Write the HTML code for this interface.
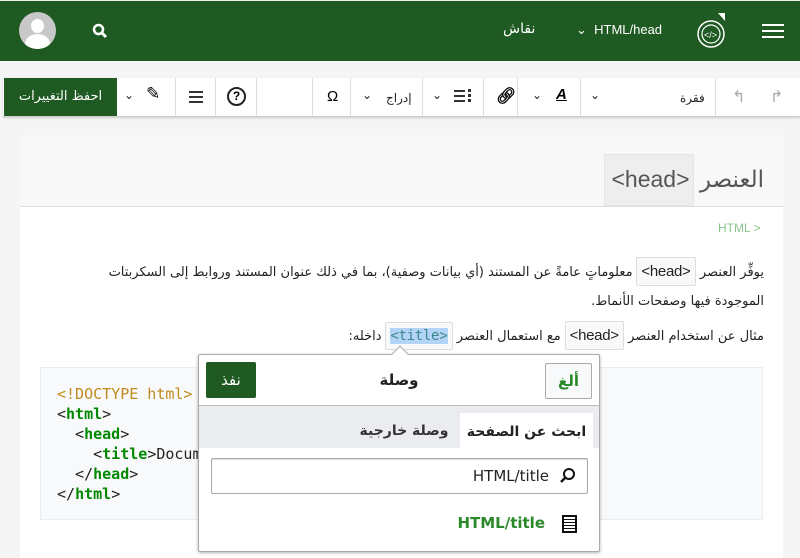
<!DOCTYPE html>
<html><head><meta charset="utf-8"><style>
*{box-sizing:border-box;margin:0;padding:0}
body{width:800px;height:558px;overflow:hidden;background:#f5f5f5;font-family:"Liberation Sans","Noto Sans CJK SC",sans-serif;position:relative}
.a{position:absolute}
.hdr{left:0;top:0;width:800px;height:61px;background:#1f5a22;border-top:1px solid #eee}
.tb{left:3px;top:78px;width:797px;height:39px;background:#fff;border-bottom:1px solid #ccc;box-shadow:0 1px 2px #ccc}
.sep{top:78px;width:1px;height:38px;background:#ddd}
.t{color:#222;font-size:12px;top:91px}
.code{font-family:"DejaVu Sans Mono",monospace}
.ic{background:#f8f9fa;border:1px solid #ddd;border-radius:2px;font-family:"Liberation Sans",sans-serif;font-size:15px;padding:5px 4px}
</style></head><body>
<div class="a hdr"></div>
<div class="a" style="left:19px;top:12px;width:37px;height:37px;border-radius:50%;background:#c8c8c8;overflow:hidden">
<div class="a" style="left:12px;top:7px;width:13px;height:14px;border-radius:50%;background:#fff"></div>
<div class="a" style="left:6px;top:22px;width:25px;height:20px;border-radius:50% 50% 0 0;background:#fff"></div></div>
<svg class="a" style="left:92px;top:23px" width="16" height="16"><circle cx="6.5" cy="6.5" r="4.5" fill="none" stroke="#fff" stroke-width="2.5"/><path d="M10 10l4 4" stroke="#fff" stroke-width="3"/></svg>
<div class="a" style="left:503px;top:21px;color:#fff;font-size:14px;font-family:'DejaVu Sans',sans-serif">نقاش</div>
<div class="a" style="left:576px;top:22px;color:#fff;font-size:13px">⌄ &nbsp;HTML/head</div>
<svg class="a" style="left:692px;top:12px" width="44" height="40"><circle cx="19" cy="22" r="13" fill="none" stroke="#fff" stroke-width="1.5"/><circle cx="19" cy="22" r="9" fill="none" stroke="#fff" stroke-width="1.2"/><text x="12" y="26" fill="#fff" font-size="9" font-family="Liberation Sans">&lt;/&gt;</text><path d="M26 1h7v8z" fill="#fff"/></svg>
<div class="a" style="left:762px;top:24px;width:22px;height:2px;background:#fff;box-shadow:0 6px #fff,0 12px #fff"></div>

<div class="a tb"></div>
<div class="a" style="left:4px;top:78px;width:113px;height:38px;background:#1e5a22;color:#fff;font-size:13px;text-align:center;line-height:38px;font-family:'DejaVu Sans',sans-serif">احفظ التغييرات</div>
<div class="a t" style="left:124px;top:88px">⌄</div><div class="a" style="left:146px;top:84px;font-size:17px">✎</div>
<div class="a sep" style="left:175px"></div>
<div class="a" style="left:189px;top:91px;width:14px;height:2px;background:#333;box-shadow:0 5px #333,0 10px #333"></div>
<div class="a sep" style="left:215px"></div>
<div class="a" style="left:227px;top:87px;width:19px;height:19px;border:2px solid #222;border-radius:50%;font-size:12px;font-weight:bold;text-align:center;line-height:15px">?</div>
<div class="a sep" style="left:256px"></div>
<div class="a sep" style="left:312px"></div>
<div class="a" style="left:327px;top:88px;font-size:15px">Ω</div>
<div class="a sep" style="left:350px"></div>
<div class="a t" style="left:362px;top:88px">⌄</div><div class="a t" style="left:386px">إدراج</div>
<div class="a sep" style="left:422px"></div>
<div class="a t" style="left:432px;top:88px">⌄</div>
<div class="a" style="left:454px;top:90px;width:11px;height:2px;background:#333;box-shadow:0 5px #333,0 10px #333"></div>
<div class="a" style="left:468px;top:89px;width:3px;height:3px;background:#333;box-shadow:0 5px #333,0 10px #333"></div>
<div class="a sep" style="left:483px"></div>
<div class="a" style="left:496px;top:86px;font-size:16px;font-weight:bold">&#x1F517;&#xFE0E;</div>
<div class="a sep" style="left:517px"></div>
<div class="a t" style="left:532px;top:88px">⌄</div>
<div class="a" style="left:556px;top:86px;font-size:15px;font-weight:bold;font-style:italic;text-decoration:underline">A</div>
<div class="a sep" style="left:580px"></div>
<div class="a t" style="left:590px;top:88px">⌄</div><div class="a t" style="left:680px">فقرة</div>
<div class="a sep" style="left:715px"></div>
<div class="a" style="left:732px;top:87px;color:#aaa;font-size:16px">↰</div>
<div class="a" style="left:770px;top:87px;color:#aaa;font-size:16px">↱</div>

<div class="a" style="left:20px;top:135px;width:763px;height:423px;background:#fff"></div>
<div class="a" style="left:20px;top:135px;width:763px;height:72px;background:#f8f8f8;border-bottom:1px solid #ddd"></div>
<div class="a" style="left:604px;top:154px;width:90px;height:52px;background:#eee;border:1px solid #e4e4e4"></div>
<div class="a" style="top:166px;font-size:23px;color:#555;direction:rtl;width:160px;text-align:right;left:604px"><span style="font-family:'DejaVu Sans',sans-serif">العنصر</span> <span style="padding:0 4px">&lt;head&gt;</span></div>
<div class="a" style="left:718px;top:221px;font-size:12px;color:#8bc48b">HTML &gt;</div>
<div class="a" style="left:40px;top:257px;width:724px;direction:rtl;font-size:13px;line-height:29px;color:#222;font-family:'DejaVu Sans',sans-serif;letter-spacing:-.3px;white-space:nowrap">يوفِّر العنصر <span class="ic">&lt;head&gt;</span> معلوماتٍ عامةً عن المستند (أي بيانات وصفية)، بما في ذلك عنوان المستند وروابط إلى السكربتات<br>الموجودة فيها وصفحات الأنماط.</div>
<div class="a" style="left:40px;top:322px;width:724px;direction:rtl;font-size:13px;line-height:28px;color:#222;font-family:'DejaVu Sans',sans-serif;letter-spacing:-.3px">مثال عن استخدام العنصر <span class="ic">&lt;head&gt;</span> مع استعمال العنصر <span class="ic" style="font-family:'DejaVu Sans Mono',monospace;font-size:14px"><span style="background:#b4d4f7;color:#3a8a8a">&lt;title&gt;</span></span> داخله:</div>

<div class="a code" style="left:40px;top:367px;width:723px;height:153px;background:#f8f9fa;border:1px solid #eaecf0;padding:16px 0 0 16px;font-size:15px;line-height:20px;color:#222;white-space:pre"><span style="color:#c08a1e">&lt;!DOCTYPE html&gt;</span>
&lt;<b style="color:#080">html</b>&gt;
  &lt;<b style="color:#080">head</b>&gt;
    &lt;<b style="color:#080">title</b>&gt;Document&lt;/<b style="color:#080">title</b>&gt;
  &lt;/<b style="color:#080">head</b>&gt;
&lt;/<b style="color:#080">html</b>&gt;</div>

<div class="a" style="left:198px;top:354px;width:402px;height:198px;background:#fff;border:1px solid #aaa;border-radius:2px;box-shadow:0 1px 3px rgba(0,0,0,.3);font-family:'DejaVu Sans',sans-serif">
<div class="a" style="left:7px;top:7px;width:50px;height:36px;background:#1e5a22;border-radius:2px;color:#fff;font-size:15px;text-align:center;line-height:36px">نفذ</div>
<div class="a" style="left:170px;top:16px;width:60px;text-align:center;font-size:15px;font-weight:bold;color:#222">وصلة</div>
<div class="a" style="left:346px;top:8px;width:47px;height:36px;background:#f8f9fa;border:1px solid #aaa;border-radius:2px;color:#2a8a2a;font-size:15px;font-weight:bold;text-align:center;line-height:34px">ألغ</div>
<div class="a" style="left:0;top:50px;width:400px;height:43px;background:#eaecf0;border-top:1px solid #bbb"></div>
<div class="a" style="left:261px;top:58px;width:133px;height:35px;background:#fff;font-size:14px;font-weight:bold;text-align:center;line-height:38px;color:#222">ابحث عن الصفحة</div>
<div class="a" style="left:150px;top:58px;width:110px;height:35px;font-size:14px;font-weight:bold;text-align:center;line-height:36px;color:#333">وصلة خارجية</div>
<div class="a" style="left:12px;top:103px;width:377px;height:36px;border:1px solid #aaa;border-radius:2px;box-shadow:inset 0 1px 1px #ddd"></div>
<div class="a" style="left:260px;top:112px;width:90px;text-align:right;font-size:15px;color:#222">HTML/title</div>
<svg class="a" style="left:360px;top:112px" width="18" height="18"><circle cx="10" cy="7" r="5" fill="none" stroke="#111" stroke-width="2"/><path d="M6.5 10.5L2 15" stroke="#111" stroke-width="2.5"/></svg>
<div class="a" style="left:240px;top:159px;width:106px;text-align:right;font-size:15px;font-weight:bold;color:#2a8a2a">HTML/title</div>
<div class="a" style="left:363px;top:160px;width:15px;height:18px;border:2px solid #111;background:repeating-linear-gradient(#fff 0 2px,#111 2px 3px)"></div>
</div>
<div class="a" style="left:394px;top:348px;width:12px;height:12px;background:#fff;border-left:1px solid #aaa;border-top:1px solid #aaa;transform:rotate(45deg)"></div>
</body></html>
